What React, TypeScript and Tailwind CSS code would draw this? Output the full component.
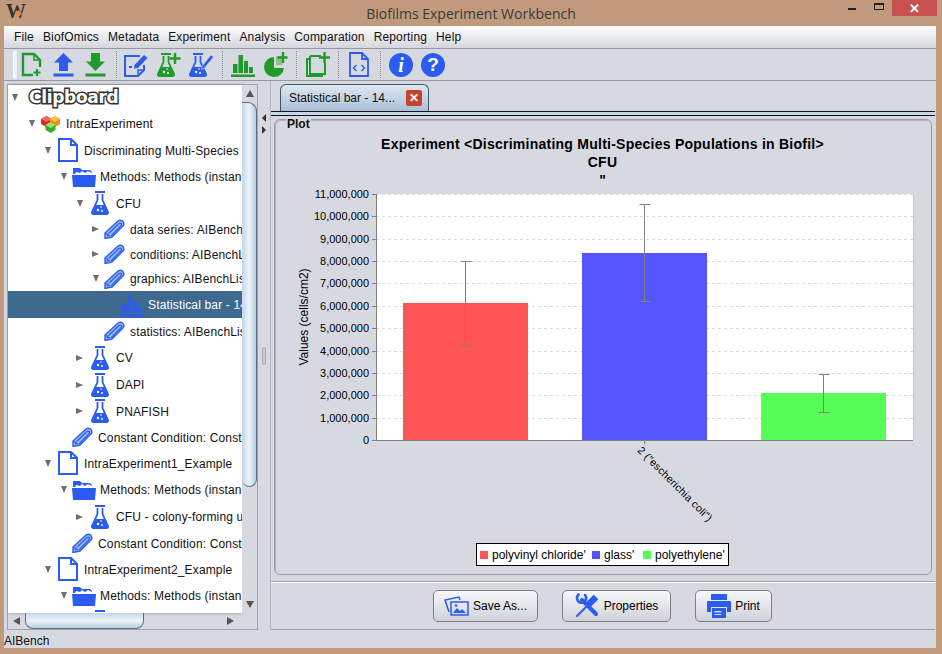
import React from "react";

const B = "#2a5cf0";
const G = "#1f9a2b";
type IP = { c?: string };

const DocPlus = () => (
  <svg width="22" height="25" viewBox="0 0 22 25" fill="none" stroke={G} strokeWidth="2.4">
    <path d="M12 23H2V2h11l6 6v7" /><path d="M13 2v6h6" strokeWidth="1.6" />
    <path d="M16 17v7M12.5 20.5h7" strokeWidth="2.2" />
  </svg>
);
const Upload = ({ c = B }: IP) => (
  <svg width="21" height="25" viewBox="0 0 21 25" fill={c}>
    <path d="M10.5 1 L20 10.5 H15 V19 H6 V10.5 H1 Z" /><rect x="0.5" y="21.5" width="20" height="3" />
  </svg>
);
const Download = ({ c = G }: IP) => (
  <svg width="21" height="25" viewBox="0 0 21 25" fill={c}>
    <path d="M6 1 H15 V9.5 H20 L10.500 19 L1 9.5 H6 Z" /><rect x="0.5" y="21.5" width="20" height="3" />
  </svg>
);
const NoteEdit = () => (
  <svg width="25" height="25" viewBox="0 0 25 25" fill="none" stroke={B} strokeWidth="2">
    <path d="M16 4H1v20h13l6-6v-5" /><path d="M5 15h3" />
    <path d="M10 16.500l.5-3.500L20 3l3.500 3-9.500 10z" fill={B} stroke="none" />
    <path d="M14 24v-6h6" strokeWidth="1.500" />
  </svg>
);
const Flask2 = ({ c }: { c: string }) => (
  <g>
    <path d="M4 1h10" stroke={c} strokeWidth="2" />
    <path d="M6.500 3v6L1 21q-.5 2 1.500 2h13q2 0 1.500-2L11.500 9V3" stroke={c} strokeWidth="1.800" fill="none" />
    <path d="M4.500 14h9L17 22H1z" fill={c} />
    <circle cx="7" cy="19" r="1.200" fill="#fff" /><circle cx="11" cy="20" r="1" fill="#fff" /><circle cx="10" cy="16" r=".8" fill="#fff" />
  </g>
);
const Flask = () => (
  <svg width="18" height="24" viewBox="0 0 18 24"><Flask2 c={B} /></svg>
);
const FlaskPlus = () => (
  <svg width="24" height="25" viewBox="0 0 24 25" fill="none">
    <g transform="translate(0 1)"><Flask2 c={G} /></g>
    <path d="M18 1v11M12.500 6.500h11" stroke={G} strokeWidth="2.400" />
  </svg>
);
const FlaskPencil = () => (
  <svg width="25" height="25" viewBox="0 0 25 25" fill="none">
    <g transform="translate(0 1)"><Flask2 c={B} /></g>
    <path d="M13 14l9-11 2.500 2-9 11-3 1.500z" fill={B} stroke="#d6d9e0" strokeWidth=".6" />
  </svg>
);
const Bars = ({ c = G }: IP) => (
  <svg width="24" height="24" viewBox="0 0 24 24" fill={c}>
    <rect x="2" y="11" width="4.500" height="9" /><rect x="7.500" y="2" width="4.500" height="18" />
    <rect x="13" y="8" width="4" height="12" /><rect x="18" y="14" width="4" height="6" />
    <rect x="0" y="21.500" width="24" height="2.500" />
  </svg>
);
const PiePlus = () => (
  <svg width="25" height="25" viewBox="0 0 25 25" fill={G}>
    <path d="M11 5A10 10 0 1 0 21 16H11z" />
    <path d="M13 4h6v9h-6z" fill="#8cc28f" />
    <path d="M20 0v11M14.500 5.500h10" stroke={G} strokeWidth="2.400" fill="none" />
  </svg>
);
const CopyPlus = () => (
  <svg width="24" height="25" viewBox="0 0 24 25" fill="none" stroke={G} strokeWidth="2">
    <path d="M3 7H1v17h15v-2" /><path d="M4 4h11M4 4v18h15V11" />
    <path d="M18.500 0v11M13 5.500h11" strokeWidth="2.400" />
  </svg>
);
const DocCode = () => (
  <svg width="20" height="25" viewBox="0 0 20 25" fill="none" stroke={B} strokeWidth="1.800">
    <path d="M13 1H1v23h18V7z" /><path d="M13 1v6h6" />
    <path d="M7.500 13l-3 3 3 3M12.500 13l3 3-3 3" strokeWidth="1.400" />
  </svg>
);
const Info = () => (
  <div className="flex h-6 w-6 items-center justify-center rounded-full bg-[#2a5cf0] font-['Liberation_Serif',serif] text-[20px] font-bold italic leading-none text-white">i</div>
);
const Help = () => (
  <div className="flex h-6 w-6 items-center justify-center rounded-full bg-[#2a5cf0] font-['Liberation_Sans',sans-serif] text-[19px] font-bold leading-none text-white">?</div>
);
const Sep = ({ cls }: { cls: string }) => <div className={`h-[27px] w-0 border-l border-dotted border-[#8a8d96] ${cls}`} />;

const Doc = () => (
  <svg width="20" height="24" viewBox="0 0 20 24" fill="none" stroke={B} strokeWidth="2">
    <path d="M13 1H1v22h18V7z" /><path d="M13 1v6h6" />
  </svg>
);
const Folder = () => (
  <svg width="24" height="20" viewBox="0 0 24 20" fill={B}>
    <path d="M1 1h7l2 2h8l2 2v1l-4-2-3 2-3-2-2 2-4-1-1 2H1z" />
    <path d="M0 8h24l-1 12H1z" />
  </svg>
);
const Clip = () => (
  <svg width="21" height="20" viewBox="0 0 21 20" fill="none" stroke={B} strokeLinejoin="round">
    <path d="M1 14L14 2q2.500-1.500 4.500 0t1 4.500L8 18l-7 1.500z" strokeWidth="1.400" fill="#9db8f8" />
    <path d="M4.500 14.500L15 4.500q1.500-.8 2.300.2t-.3 2L7 17" strokeWidth="1.300" />
    <path d="M3 17l-.5-3 3.500 3z" fill={B} strokeWidth=".5" />
  </svg>
);
const Cubes = () => (
  <svg width="21" height="18" viewBox="0 0 21 18">
    <path d="M1 4l5.500-3L12 4v5l-5.500 3L1 9z" fill="#e0242c" /><path d="M1 4l5.500 3L12 4 6.500 1z" fill="#f26a5e" />
    <path d="M10 4l5-3 5 3v5l-5 3-5-3z" fill="#f38a16" /><path d="M10 4l5 3 5-3-5-3z" fill="#fbc14e" />
    <path d="M5.500 10l5-3 5 3v5l-5 3-5-3z" fill="#3fa82c" /><path d="M5.500 10l5 3 5-3-5-3z" fill="#a0e070" />
  </svg>
);

const Down = () => <div className="h-0 w-0 border-x-[3.5px] border-t-[7px] border-x-transparent border-t-[#6e6e6e]" />;
const Right = () => <div className="h-0 w-0 border-y-[3.5px] border-l-[7px] border-y-transparent border-l-[#6e6e6e]" />;

type Row = { t: string; h: string; pl: string; a?: "d" | "r"; box: string; i: React.ReactNode; sel?: boolean };
const flask = <Flask />;
const rows: Row[] = [
  { t: "IntraExperiment", h: "h-[27px]", pl: "pl-[20px]", a: "d", box: "w-[31px]", i: <Cubes /> },
  { t: "Discriminating Multi-Species", h: "h-[26px]", pl: "pl-[36px]", a: "d", box: "w-[33px]", i: <Doc /> },
  { t: "Methods: Methods (instanc", h: "h-[27px]", pl: "pl-[52px]", a: "d", box: "w-[33px]", i: <Folder /> },
  { t: "CFU", h: "h-[26px]", pl: "pl-[68px]", a: "d", box: "w-[33px]", i: flask },
  { t: "data series: AIBench", h: "h-[26px]", pl: "pl-[84px]", a: "r", box: "w-[31px]", i: <Clip /> },
  { t: "conditions: AIBenchL", h: "h-[24px]", pl: "pl-[84px]", a: "r", box: "w-[31px]", i: <Clip /> },
  { t: "graphics: AIBenchLis", h: "h-[25px]", pl: "pl-[84px]", a: "d", box: "w-[31px]", i: <Clip /> },
  { t: "Statistical bar - 14", h: "h-[27px]", pl: "pl-[100px]", box: "w-[33px]", i: <Bars c={B} />, sel: true },
  { t: "statistics: AIBenchLis", h: "h-[26px]", pl: "pl-[84px]", box: "w-[31px]", i: <Clip /> },
  { t: "CV", h: "h-[27px]", pl: "pl-[68px]", a: "r", box: "w-[33px]", i: flask },
  { t: "DAPI", h: "h-[27px]", pl: "pl-[68px]", a: "r", box: "w-[33px]", i: flask },
  { t: "PNAFISH", h: "h-[26px]", pl: "pl-[68px]", a: "r", box: "w-[33px]", i: flask },
  { t: "Constant Condition: Const", h: "h-[26px]", pl: "pl-[52px]", box: "w-[31px]", i: <Clip /> },
  { t: "IntraExperiment1_Example", h: "h-[26px]", pl: "pl-[36px]", a: "d", box: "w-[33px]", i: <Doc /> },
  { t: "Methods: Methods (instanc", h: "h-[27px]", pl: "pl-[52px]", a: "d", box: "w-[33px]", i: <Folder /> },
  { t: "CFU - colony-forming u", h: "h-[27px]", pl: "pl-[68px]", a: "r", box: "w-[33px]", i: flask },
  { t: "Constant Condition: Const", h: "h-[26px]", pl: "pl-[52px]", box: "w-[31px]", i: <Clip /> },
  { t: "IntraExperiment2_Example", h: "h-[26px]", pl: "pl-[36px]", a: "d", box: "w-[33px]", i: <Doc /> },
  { t: "Methods: Methods (instanc", h: "h-[27px]", pl: "pl-[52px]", a: "d", box: "w-[33px]", i: <Folder /> },
  { t: "", h: "h-[26px]", pl: "pl-[68px]", box: "w-[33px]", i: flask },
];

const ticks = [
  "11,000,000", "10,000,000", "9,000,000", "8,000,000", "7,000,000", "6,000,000",
  "5,000,000", "4,000,000", "3,000,000", "2,000,000", "1,000,000", "0",
];
const yAt = (i: number) => 194 + i * 22.36;
const bars = [
  { x: 403, y: 303, c: "#ff5555", ex: 465.5, t: 261, b: 345 },
  { x: 582, y: 253, c: "#5555ff", ex: 644.5, t: 204, b: 301 },
  { x: 761, y: 393, c: "#55ff55", ex: 823.5, t: 374, b: 412 },
];

const Chart = () => (
  <svg width="656" height="454" viewBox="275 120 656 454" className="block font-['Liberation_Sans',sans-serif]">
    <g fontWeight="700" fontSize="14" textAnchor="middle" fill="#000">
      <text x="602.500" y="149" letterSpacing=".25">{"Experiment <Discriminating Multi-Species Populations in Biofil>"}</text>
      <text x="602.500" y="167" letterSpacing=".25">CFU</text>
      <text x="602.500" y="185">"</text>
    </g>
    <rect x="376" y="194" width="537" height="246" fill="#fff" />
    {ticks.map((t, i) => (
      <g key={t}>
        {i < 11 && <line x1="376" x2="913" y1={Math.round(yAt(i)) + 0.5} y2={Math.round(yAt(i)) + 0.5} stroke="#dadada" strokeDasharray="3 3" />}
        <line x1="372" x2="376" y1={Math.round(yAt(i)) + 0.5} y2={Math.round(yAt(i)) + 0.5} stroke="#808080" />
        <text x="369" y={Math.round(yAt(i)) + 4} textAnchor="end" fontSize="11" fill="#000">{t}</text>
      </g>
    ))}
    <line x1="376.500" x2="376.500" y1="194" y2="440" stroke="#808080" />
    <line x1="913.500" x2="913.500" y1="194" y2="440" stroke="#c8c8c8" />
    {bars.map((b) => (
      <g key={b.x}>
        <rect x={b.x} y={b.y} width="125" height={440 - b.y} fill={b.c} />
        <path d={`M${b.ex} ${b.t}V${b.b}M${b.ex - 5} ${b.t}.5h11M${b.ex - 5} ${b.b}.5h11`} stroke="#808080" fill="none" />
      </g>
    ))}
    <line x1="376" x2="913" y1="440.500" y2="440.500" stroke="#808080" />
    <line x1="644.500" x2="644.500" y1="440" y2="444" stroke="#808080" />
    <text transform="translate(308 317) rotate(-90)" textAnchor="middle" fontSize="12" fill="#000">Values (cells/cm2)</text>
    <text transform="translate(637 451) rotate(45)" fontSize="10.500" fill="#000" letterSpacing=".25">{'2 ("escherichia coli")'}</text>
    <rect x="476.500" y="543.500" width="252" height="22" fill="#fff" stroke="#000" />
    <rect x="480" y="551" width="8" height="8" fill="#ff5555" />
    <text x="492" y="559" fontSize="12">polyvinyl chloride'</text>
    <rect x="592" y="551" width="8" height="8" fill="#5555ff" />
    <text x="604" y="559" fontSize="12">glass'</text>
    <rect x="643" y="551" width="8" height="8" fill="#55ff55" />
    <text x="655" y="559" fontSize="12">polyethylene'</text>
  </svg>
);

const Btn = ({ w, icon, label }: { w: string; icon: React.ReactNode; label: string }) => (
  <button className={`flex h-[32px] ${w} items-center justify-center gap-[4px] rounded-[5px] border border-[#7c7f86] bg-gradient-to-b from-[#f6f7f9] to-[#cfd2d9] text-[12px] text-black`}>
    {icon}<span>{label}</span>
  </button>
);

export default function App() {
  return (
    <div className="flex h-[654px] w-[942px] flex-col overflow-hidden bg-[#c19a7d] font-['Liberation_Sans',sans-serif] text-[12px] text-[#111]">
      <div className="relative flex h-[26px] shrink-0 items-center justify-center">
        <div className="absolute left-[6px] top-0 font-['Liberation_Serif',serif] text-[20px] font-bold leading-[22px] text-[#333]">W</div>
        <div className="absolute left-[16px] top-[11px] h-[5px] w-[5px] rotate-45 bg-[#dd8a3c]" />
        <span className="font-['Open_Sans',sans-serif] text-[14px] text-[#3a3a3a]">Biofilms Experiment Workbench</span>
        <div className="absolute right-[5px] top-0 flex items-start">
          <div className="mr-[18px] mt-[8px] h-[2px] w-[8px] bg-[#222]" />
          <div className="mr-[8px] mt-[3px] h-[7px] w-[10px] border border-t-2 border-[#222]" />
          <div className="flex h-[16px] w-[45px] items-center justify-center bg-[#c75050] text-[13px] font-bold leading-none text-white">✕</div>
        </div>
      </div>

      <div className="ml-[4px] flex h-[622px] w-[932px] flex-col bg-[#d6d9e0]">
        <div className="flex h-[23px] shrink-0 items-center gap-[9px] border-b border-[#9598a2] bg-gradient-to-b from-white to-[#d4d6dc] pl-[10px] tracking-[0.15px]">
          {["File", "BiofOmics", "Metadata", "Experiment", "Analysis", "Comparation", "Reporting", "Help"].map((m) => (
            <span key={m}>{m}</span>
          ))}
        </div>
        <div className="flex h-[32px] shrink-0 items-center border-b border-[#9598a2] pl-[9px]">
          <div className="mr-[4px] h-[29px] w-[4px] rounded-l-[3px] bg-gradient-to-r from-white to-[#e8eaee]" />
          <div className="flex w-[22px] justify-center"><DocPlus /></div>
          <div className="ml-[10px]"><Upload /></div>
          <div className="ml-[11px]"><Download /></div>
          <Sep cls="ml-[10px] mr-[7px]" />
          <NoteEdit />
          <div className="ml-[8px]"><FlaskPlus /></div>
          <div className="ml-[8px]"><FlaskPencil /></div>
          <Sep cls="ml-[8px] mr-[8px]" />
          <Bars />
          <div className="ml-[8px]"><PiePlus /></div>
          <Sep cls="ml-[8px] mr-[9px]" />
          <CopyPlus />
          <Sep cls="ml-[8px] mr-[10px]" />
          <DocCode />
          <Sep cls="ml-[11px] mr-[8px]" />
          <Info />
          <div className="ml-[8px]"><Help /></div>
        </div>

        <div className="flex h-[549px] shrink-0">
          <div className="ml-[3px] mt-[3px] flex h-[546px] w-[251px] shrink-0 flex-col border border-[#a0a3ab] bg-[#d6d9e0]">
            <div className="flex h-[528px] shrink-0">
              <div className="w-[234px] shrink-0 overflow-hidden bg-white shadow-[1px_0_3px_#8a8d96]">
                <div className="flex h-[25px] items-center pl-[4px]">
                  <Down />
                  <span className="ml-[11px] font-['DejaVu_Sans',sans-serif] text-[17px] font-bold leading-none tracking-[-0.3px] text-white [-webkit-text-stroke:3px_#333] [paint-order:stroke_fill]">Clipboard</span>
                </div>
                {rows.map((r, i) => (
                  <div key={i} className={`flex items-center whitespace-nowrap ${r.h} ${r.pl} ${r.sel ? "bg-[#3d6a8e] text-white" : ""}`}>
                    <div className="flex w-[7px] shrink-0 justify-center">{r.a === "d" ? <Down /> : r.a === "r" ? <Right /> : null}</div>
                    <div className={`flex shrink-0 justify-center ${r.box}`}>{r.i}</div>
                    <span className="pt-[1px] tracking-[0.15px]">{r.t}</span>
                  </div>
                ))}
              </div>
              <div className="flex w-[15px] shrink-0 flex-col bg-[#d6d9e0]">
                <div className="flex h-[17px] shrink-0 items-center justify-center">
                  <div className="h-0 w-0 border-x-[4px] border-b-[7px] border-x-transparent border-b-[#555]" />
                </div>
                <div className="h-[385px] shrink-0 rounded-b-[9px] rounded-tr-[11px] border-y border-r border-[#5b6d80] bg-gradient-to-r from-[#c3d6e8] via-[#eef4f9] to-[#b8cde0]" />
                <div className="flex-1" />
                <div className="flex h-[17px] shrink-0 items-center justify-center">
                  <div className="h-0 w-0 border-x-[4px] border-t-[7px] border-x-transparent border-t-[#555]" />
                </div>
              </div>
            </div>
            <div className="flex h-[16px] shrink-0 items-center">
              <div className="flex w-[17px] shrink-0 justify-center">
                <div className="h-0 w-0 border-y-[4px] border-r-[7px] border-y-transparent border-r-[#555]" />
              </div>
              <div className="h-[16px] w-[119px] rounded-b-[8px] border border-t-0 border-[#5b6d80] bg-gradient-to-b from-[#c3d6e8] via-[#eef4f9] to-[#b8cde0]" />
              <div className="ml-[78px] flex w-[17px] justify-center">
                <div className="h-0 w-0 border-y-[4px] border-l-[7px] border-y-transparent border-l-[#555]" />
              </div>
            </div>
          </div>

          <div className="flex w-[13px] shrink-0 flex-col items-center border-r border-[#b5b8c0] pt-[33px]">
            <div className="h-0 w-0 border-y-[4px] border-r-[4px] border-y-transparent border-r-[#333]" />
            <div className="mt-[4px] h-0 w-0 border-y-[4px] border-l-[4px] border-y-transparent border-l-[#333]" />
            <div className="mt-[213px] h-[18px] w-[4px] rounded-[2px] border border-[#a8abb3] bg-[#c8ccd3]" />
          </div>

          <div className="flex w-[664px] shrink-0 flex-col">
            <div className="flex h-[30px] shrink-0 items-end pl-[9px]">
              <div className="flex h-[27px] w-[149px] items-center justify-between rounded-t-[6px] border border-b-0 border-[#3f5568] bg-gradient-to-b from-[#dfe7ef] to-[#aac1d8] pl-[8px] pr-[6px]">
                <span>Statistical bar - 14...</span>
                <div className="flex h-[16px] w-[16px] items-center justify-center rounded-[2px] bg-[#c8412c] text-[12px] font-bold leading-none text-white">✕</div>
              </div>
            </div>
            <div className="h-[5px] shrink-0 border-y border-[#10161c] bg-[#c8d6e6]" />
            <div className="relative ml-[3px] mt-[3px] h-[456px] w-[658px] shrink-0 rounded-[6px] border border-[#9a9da5] shadow-[inset_1px_1px_1px_#b0b3ba]">
              <span className="absolute left-[11px] top-[-2px] bg-[#d6d9e0] px-[1px] font-bold leading-[13px]">Plot</span>
              <Chart />
            </div>
            <div className="mt-[6px] flex h-[49px] shrink-0 items-center justify-center gap-[24px] border-y border-[#9ea1a9] pr-[1px] shadow-[inset_0_1px_0_#fff]">
              <Btn w="w-[105px]" label="Save As..." icon={
                <svg width="25" height="21" viewBox="0 0 25 21" fill="none" stroke={B} strokeWidth="1.500">
                  <path d="M5 17L1 5l14-3 1 3" /><rect x="7" y="7" width="17" height="13" />
                  <path d="M9 18l4-5 3 3 2-2 4 4z" fill={B} stroke="none" /><circle cx="12" cy="10.500" r="1.300" fill={B} stroke="none" />
                </svg>
              } />
              <Btn w="w-[109px]" label="Properties" icon={
                <svg width="25" height="25" viewBox="0 0 25 25" fill="none" stroke={B} strokeLinecap="round">
                  <path d="M7 7l14 14" strokeWidth="4" />
                  <path d="M3.500 1.500a5 5 0 0 0 .5 7.500 5 5 0 0 0 6-1 5 5 0 0 0 0-6" strokeWidth="2.600" />
                  <path d="M2 23l9-9" strokeWidth="2" />
                  <path d="M13 12l8-8" strokeWidth="6.500" strokeLinecap="butt" />
                </svg>
              } />
              <Btn w="w-[77px]" label="Print" icon={
                <svg width="24" height="24" viewBox="0 0 24 24" fill={B}>
                  <path d="M4 0h16v6H4z" /><path d="M1 7h22q1 0 1 1v10h-4v-5H4v5H0V8q0-1 1-1z" />
                  <path d="M5 14h14v10H5zM7.500 17v1.500h7V17zm0 3v1h7v-1z" fillRule="evenodd" />
                </svg>
              } />
            </div>
          </div>
        </div>
        <div className="flex h-[18px] shrink-0 items-center pt-[3px]">AIBench</div>
      </div>
    </div>
  );
}
